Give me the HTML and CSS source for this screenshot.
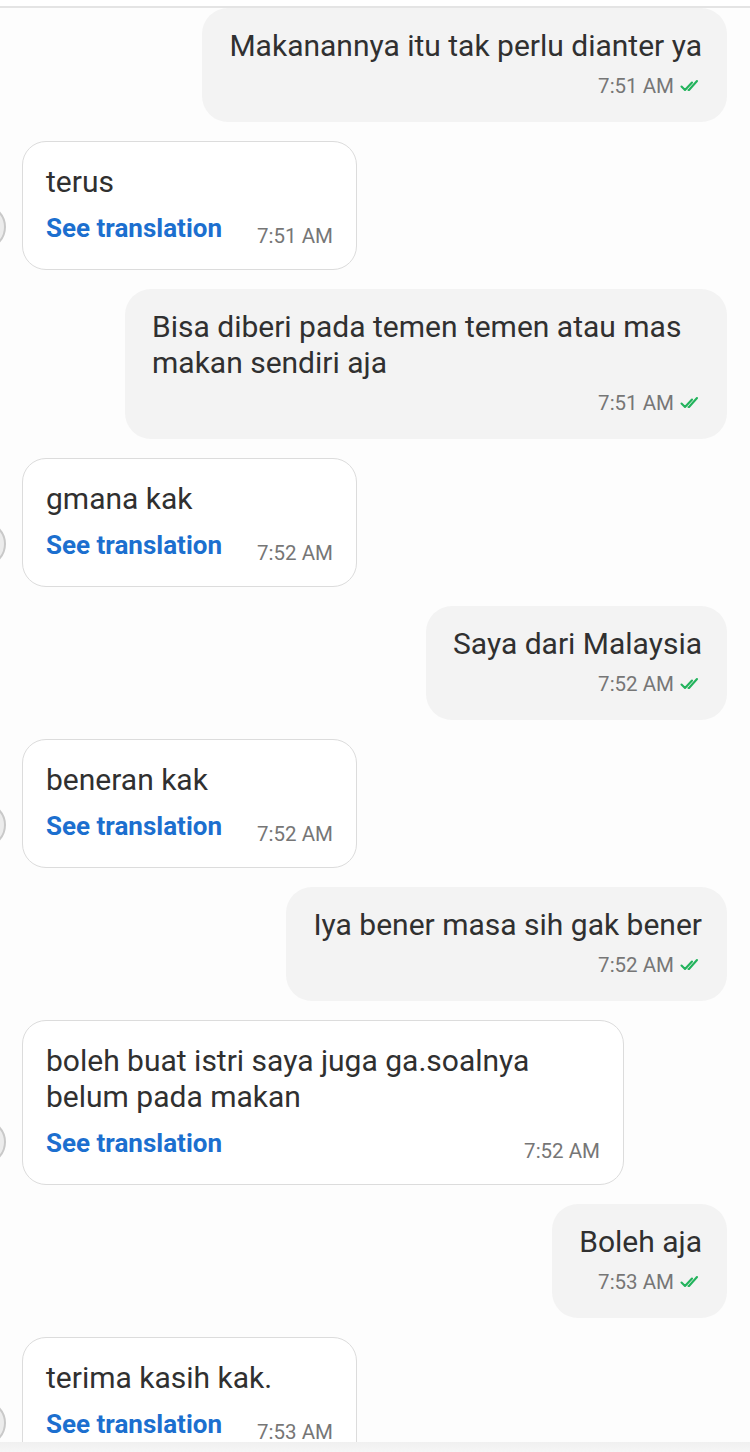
FILE: index.html
```html
<!DOCTYPE html>
<html>
<head>
<meta charset="utf-8">
<link rel="stylesheet" href="styles.css">
</head>
<body>
<div class="screen">
  <div class="topbar"></div>
  <div class="chat">
    <div class="row sent">
      <div class="bubble out">
        <div class="text">Makanannya itu tak perlu dianter ya</div>
        <div class="meta"><span class="time">7:51 AM</span><svg class="ticks" viewBox="0 0 22 14"><path d="M1.5 7.5 L5 11 L12 3.5 M8.5 11 L9 11 L17 2" /></svg></div>
      </div>
    </div>
    <div class="row recv">
      <div class="avatar"></div>
      <div class="bubble in">
        <div class="text">terus</div>
        <div class="foot"><span class="link">See translation</span><span class="time">7:51 AM</span></div>
      </div>
    </div>
    <div class="row sent">
      <div class="bubble out">
        <div class="text">Bisa diberi pada temen temen atau mas makan sendiri aja</div>
        <div class="meta"><span class="time">7:51 AM</span><svg class="ticks" viewBox="0 0 22 14"><path d="M1.5 7.5 L5 11 L12 3.5 M8.5 11 L9 11 L17 2" /></svg></div>
      </div>
    </div>
    <div class="row recv">
      <div class="avatar"></div>
      <div class="bubble in">
        <div class="text">gmana kak</div>
        <div class="foot"><span class="link">See translation</span><span class="time">7:52 AM</span></div>
      </div>
    </div>
    <div class="row sent">
      <div class="bubble out">
        <div class="text">Saya dari Malaysia</div>
        <div class="meta"><span class="time">7:52 AM</span><svg class="ticks" viewBox="0 0 22 14"><path d="M1.5 7.5 L5 11 L12 3.5 M8.5 11 L9 11 L17 2" /></svg></div>
      </div>
    </div>
    <div class="row recv">
      <div class="avatar"></div>
      <div class="bubble in">
        <div class="text">beneran kak</div>
        <div class="foot"><span class="link">See translation</span><span class="time">7:52 AM</span></div>
      </div>
    </div>
    <div class="row sent">
      <div class="bubble out">
        <div class="text">Iya bener masa sih gak bener</div>
        <div class="meta"><span class="time">7:52 AM</span><svg class="ticks" viewBox="0 0 22 14"><path d="M1.5 7.5 L5 11 L12 3.5 M8.5 11 L9 11 L17 2" /></svg></div>
      </div>
    </div>
    <div class="row recv">
      <div class="avatar"></div>
      <div class="bubble in">
        <div class="text">boleh buat istri saya juga ga.soalnya belum pada makan</div>
        <div class="foot"><span class="link">See translation</span><span class="time">7:52 AM</span></div>
      </div>
    </div>
    <div class="row sent">
      <div class="bubble out">
        <div class="text">Boleh aja</div>
        <div class="meta"><span class="time">7:53 AM</span><svg class="ticks" viewBox="0 0 22 14"><path d="M1.5 7.5 L5 11 L12 3.5 M8.5 11 L9 11 L17 2" /></svg></div>
      </div>
    </div>
    <div class="row recv">
      <div class="avatar"></div>
      <div class="bubble in">
        <div class="text">terima kasih kak.</div>
        <div class="foot"><span class="link">See translation</span><span class="time">7:53 AM</span></div>
      </div>
    </div>
  </div>
  <div class="bottombar"></div>
</div>
</body>
</html>
```
FILE: styles.css
```css
* { box-sizing: border-box; }
html, body { margin: 0; padding: 0; background: #ffffff; }
body {
  font-family: Roboto, "Noto Sans", "Liberation Sans", sans-serif;
  color: #303030;
}
.screen {
  position: relative;
  width: 750px;
  height: 1452px;
  overflow: hidden;
  background: #fdfdfd;
}
.topbar {
  height: 8px;
  background: #ffffff;
  border-bottom: 2px solid #e4e4e4;
}
.chat {
  display: flex;
  flex-direction: column;
  gap: 19px;
  padding: 0 23px 0 22px;
}
.row { display: flex; align-items: flex-end; }
.row.sent { justify-content: flex-end; }
.row.recv { justify-content: flex-start; }
.bubble { max-width: 602px; }
.bubble.out {
  background: #f3f3f3;
  border-radius: 26px;
  padding: 20px 25px 22px 27px;
}
.bubble.in {
  background: #ffffff;
  border: 1.5px solid #dcdcdc;
  border-radius: 24px;
  padding: 22px 23px 25px 23px;
}
.text {
  font-size: 30px;
  line-height: 36px;
}
.meta {
  display: flex;
  justify-content: flex-end;
  align-items: center;
  gap: 6px;
  margin-top: 8px;
  height: 28px;
}
.time {
  font-size: 20.5px;
  color: #767676;
}
.ticks {
  width: 22px;
  height: 14px;
  fill: none;
  stroke: #22b35c;
  stroke-width: 2.1;
  stroke-linecap: round;
  stroke-linejoin: round;
}
.foot {
  display: flex;
  align-items: flex-start;
  margin-top: 12px;
  height: 32px;
}
.link {
  font-size: 26px;
  font-weight: 700;
  color: #1c6fcf;
  line-height: 32px;
  margin-right: 35px;
}
.foot .time {
  margin-left: auto;
  line-height: 32px;
  margin-top: 8px;
}
.avatar {
  flex: none;
  width: 46px;
  height: 46px;
  border-radius: 50%;
  border: 2px solid #c9c9c9;
  background: #ececec;
  margin-left: -62px;
  margin-right: 16px;
  margin-bottom: 20px;
}
.bottombar {
  position: absolute;
  left: 0;
  right: 0;
  bottom: 0;
  height: 10px;
  background: linear-gradient(to bottom, #f0f0f0, #f6f6f6);
}
```
